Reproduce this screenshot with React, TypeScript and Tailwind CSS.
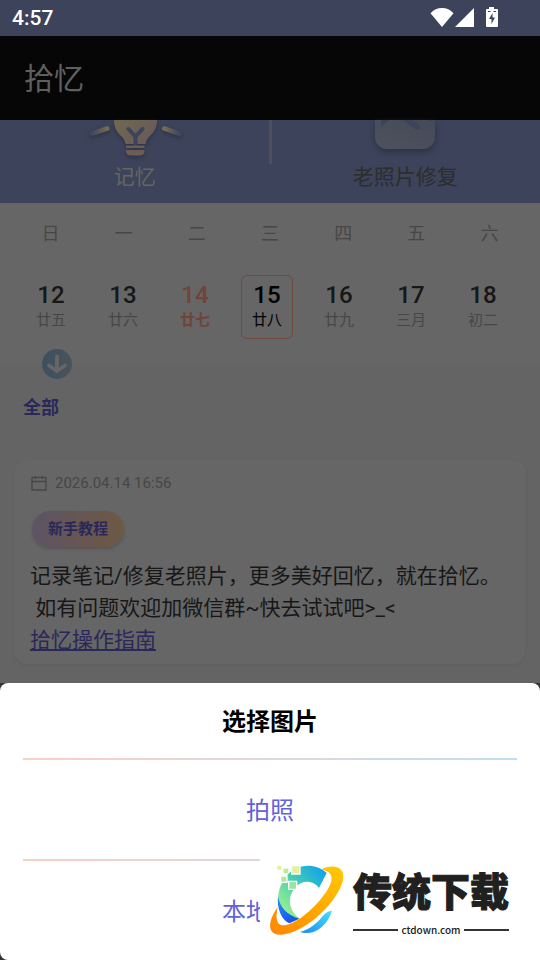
const weekdays = ['日', '一', '二', '三', '四', '五', '六'];

type Day = { day: string; lunar: string; state?: 'accent' | 'selected' };

const days: Day[] = [
  { day: '12', lunar: '廿五' },
  { day: '13', lunar: '廿六' },
  { day: '14', lunar: '廿七', state: 'accent' },
  { day: '15', lunar: '廿八', state: 'selected' },
  { day: '16', lunar: '廿九' },
  { day: '17', lunar: '三月' },
  { day: '18', lunar: '初二' },
];

function StatusBar() {
  return (
    <div className="flex h-9 items-center justify-between bg-[#3c435a] pl-3 pr-[41px] text-white">
      <span className="text-[21px] font-medium leading-9">4:57</span>
      <div className="flex items-center">
        <svg className="h-5 w-6" viewBox="0 0 24 20" fill="currentColor" aria-hidden="true">
          <path d="M12 19 0.5 5.2C3.5 1.700 7.500 0 12 0s8.500 1.700 11.500 5.200z" />
        </svg>
        <svg className="ml-px h-5 w-5" viewBox="0 0 20 20" fill="currentColor" aria-hidden="true">
          <path d="M19 0v19H0z" />
        </svg>
        <svg className="ml-2.5 h-[22px] w-3.5" viewBox="0 -1 14 22" aria-hidden="true">
          <path d="M4 -1h5v2h3a1 1 0 0 1 1 1v16a1 1 0 0 1-1 1H2a1 1 0 0 1-1-1V2a1 1 0 0 1 1-1h2z" fill="currentColor" />
          <path d="M7.500 5 4 11h2.500v5L10 9.500H7.500z" fill="#3c435a" />
          <path d="M3 3.500h2.500M8.500 3.500H11" stroke="#3c435a" />
        </svg>
      </div>
    </div>
  );
}

function BulbIcon() {
  return (
    <svg className="h-10 w-[100px] drop-shadow-[0_2px_2px_#2c3144]" viewBox="0 0 100 40" aria-hidden="true">
      <defs>
        <linearGradient id="bulb" x1="0" y1="0" x2="1" y2="0.500">
          <stop offset="0" stopColor="#6f684f" />
          <stop offset="1" stopColor="#695b5a" />
        </linearGradient>
        <linearGradient id="rayLeft" x1="1" y1="0" x2="0" y2="0">
          <stop offset="0" stopColor="#726c4f" />
          <stop offset="1" stopColor="#3f4860" />
        </linearGradient>
        <linearGradient id="rayRight" x1="0" y1="0" x2="1" y2="0">
          <stop offset="0" stopColor="#726c4f" />
          <stop offset="1" stopColor="#3f4860" />
        </linearGradient>
      </defs>
      <path d="M29 0h43c0 8-3 12-7 16-3 3-4 5-4.500 8h-20c-.500-3-1.500-5-4.500-8-4-4-7-8-7-16z" fill="url(#bulb)" />
      <path d="m43.500 9 7 7.500 7-7.500M50.500 16v8" fill="none" stroke="#3c435a" strokeWidth="4" strokeLinecap="round" />
      <path d="M41 25.500h18.500v2.500H41zM41 30h18.500v1c0 3-2 4.500-5 4.500H46c-3 0-5-1.500-5-4.500z" fill="#6b5c56" />
      <path d="M22 8.500 7.500 13.500" stroke="url(#rayLeft)" strokeWidth="5" strokeLinecap="round" />
      <path d="M79.500 8.500 94 13.500" stroke="url(#rayRight)" strokeWidth="5" strokeLinecap="round" />
    </svg>
  );
}

function PhotoIcon() {
  return (
    <svg className="h-10 w-[100px] drop-shadow-[0_3px_3px_#2c3144]" viewBox="0 0 100 40" aria-hidden="true">
      <defs>
        <linearGradient id="photo" x1="0" y1="1" x2="1" y2="0">
          <stop offset="0" stopColor="#4e525e" />
          <stop offset="1" stopColor="#454a58" />
        </linearGradient>
      </defs>
      <path d="M20 0h60v17a12 12 0 0 1-12 12H32a12 12 0 0 1-12-12z" fill="url(#photo)" />
      <path d="M26 0h8l-8 7zM48 0h10l6.500 5.500c1.500 3-1.500 5-4.500 3.500z" fill="#3c435a" />
      <path d="M73 0h4v1h-4z" fill="#3c435a" />
    </svg>
  );
}

function FeatureTabs() {
  return (
    <nav className="flex h-[83px] items-start bg-[#3c435a]">
      <button className="flex flex-1 flex-col items-center text-[21px] leading-[34px] text-[#66665f]">
        <BulbIcon />
        记忆
      </button>
      <div className="-mx-px h-11 w-[3px] bg-[#4d505b]" />
      <button className="flex flex-1 flex-col items-center text-[21px] leading-[34px] text-[#2d2d2d]">
        <PhotoIcon />
        老照片修复
      </button>
    </nav>
  );
}

function DayCell({ item }: { item: Day }) {
  const tone =
    item.state === 'accent' ? 'text-[#704436] border-transparent'
      : item.state === 'selected' ? 'text-black border-[#704b3e]'
        : 'text-[#171717] border-transparent';
  const lunarTone =
    item.state === 'accent' ? 'font-bold' : item.state === 'selected' ? '' : 'text-[#474747]';
  return (
    <button className={`flex h-16 w-[52px] flex-col items-center justify-self-center rounded-md border pt-[5px] ${tone}`}>
      <span className="text-2xl font-medium leading-7">{item.day}</span>
      <span className={`text-[15px] leading-[22px] ${lunarTone}`}>{item.lunar}</span>
    </button>
  );
}

function Calendar() {
  return (
    <section className="bg-[#666666] pb-[25px]">
      <div className="grid h-[60px] grid-cols-7 items-center px-3.5 pt-0.5 text-center text-lg text-[#474747]">
        {weekdays.map((name) => <span key={name}>{name}</span>)}
      </div>
      <div className="grid grid-cols-7 pl-[15px] pr-[21px] pt-3">
        {days.map((item) => <DayCell key={item.day} item={item} />)}
      </div>
    </section>
  );
}

function Notes() {
  return (
    <section className="flex-1 bg-[#646464] px-[15px] pb-[19px]">
      <button className="relative -mt-[15px] ml-[27px] block" aria-label="展开日历">
        <svg className="size-[30px]" viewBox="0 0 30 30" aria-hidden="true">
          <defs>
            <linearGradient id="expand" x1="0" y1="0" x2="1" y2="0">
              <stop offset="0" stopColor="#3b505f" />
              <stop offset="1" stopColor="#4a535b" />
            </linearGradient>
          </defs>
          <circle cx="15" cy="15" r="15" fill="url(#expand)" />
          <path d="M15 7.500v14.500M7 16.500 15 22l8-5.500" fill="none" stroke="#666" strokeWidth="3.800" strokeLinecap="round" />
        </svg>
      </button>
      <h2 className="ml-2 mt-[15px] text-lg font-bold leading-7 text-[#2a2859]">全部</h2>
      <article className="mt-[38px] rounded-xl bg-[#666666] px-[15px] pb-2 pt-3 shadow-[0_2px_3px_#606060]">
        <div className="flex h-[22px] items-center gap-2 text-[15px] text-[#474747]">
          <svg className="ml-px size-4" viewBox="0 0 16 16" fill="none" stroke="currentColor" strokeWidth="1.300" aria-hidden="true">
            <path d="M1 2.500h14v12.500H1zM1 6.500h14M4.500 1v3M11.500 1v3" />
          </svg>
          <time>2026.04.14 16:56</time>
        </div>
        <button className="ml-0.5 mt-[17px] block h-9 rounded-full bg-linear-to-r from-[#5c5466] via-[#665654] to-[#6e5944] px-4 text-[15px] font-bold text-[#2a2859] shadow-[0_2px_3px_#555555]">
          新手教程
        </button>
        <p className="mt-[13px] whitespace-pre-wrap text-[21px] leading-8 text-[#171717]">
          {'记录笔记/修复老照片，更多美好回忆，就在拾忆。\n 如有问题欢迎加微信群~快去试试吧>_<\n'}
          <a href="#guide" className="text-[#2a2859] underline">拾忆操作指南</a>
        </p>
      </article>
    </section>
  );
}

function Divider() {
  return <div className="mx-[23px] h-0.5 bg-linear-to-r from-[#fbcfc5] to-[#bfdff2]" />;
}

function PictureSheet() {
  return (
    <div className="bg-[#333333]">
      <div role="dialog" aria-label="选择图片" className="rounded-lg bg-white text-center text-2xl">
        <h3 className="h-[75px] pt-0.5 font-bold leading-[75px] text-black">选择图片</h3>
        <Divider />
        <button className="block h-[99px] w-full pt-0.5 text-[#6361dc]">拍照</button>
        <Divider />
        <button className="block h-[99px] w-full pt-0.5 text-[#6361dc]">本地图片</button>
      </div>
    </div>
  );
}

function Watermark() {
  return (
    <div className="absolute bottom-0 right-0 flex h-[104px] w-[280px] bg-white pt-1">
      <svg className="h-20 w-[95px] shrink-0" viewBox="0 0 285 240" aria-hidden="true">
        <defs>
          <linearGradient id="ring" x1="0" y1="1" x2="1" y2="0">
            <stop offset="0" stopColor="#ff8500" />
            <stop offset="1" stopColor="#ffca05" />
          </linearGradient>
          <linearGradient id="crescent" x1="0" y1="1" x2="1" y2="0">
            <stop offset="0.150" stopColor="#9af18b" />
            <stop offset="0.550" stopColor="#42cbb5" />
            <stop offset="1" stopColor="#099cf4" />
          </linearGradient>
          <linearGradient id="base" x1="0" y1="1" x2="1" y2="0">
            <stop offset="0" stopColor="#168cf0" />
            <stop offset="1" stopColor="#48e0ff" />
          </linearGradient>
          <linearGradient id="shade" x1="0" y1="0" x2="0.600" y2="1">
            <stop offset="0" stopColor="#2693ff" />
            <stop offset="1" stopColor="#1752e8" />
          </linearGradient>
        </defs>
        <path d="M78 50C106 12 163 5 200 39L177 84C160 60 126 58 105 83c-26 32-17 70 14 92l-33 11c-38-33-43-91-8-136z" fill="url(#crescent)" />
        <path d="M54 108c6 35 28 58 64 68l-30 14c-23-10-38-43-34-82z" fill="url(#shade)" />
        <path d="M216 152c-14 47-55 77-96 64 32-9 51-27 69-49 8-9 17-14 27-15z" fill="url(#base)" />
        <path d="M183 29c27-16 57-12 65 8 13 36-39 107-93 147-52 39-107 52-121 28-9-16-1-42 19-71-8 38-1 54 15 55 31 0 79-36 112-76 38-45 53-85 3-91z" fill="url(#ring)" />
        <path d="M52 18h11v11H52z" fill="#e7f28d" />
        <path d="M71 26h14v14H71z" fill="#b7ed93" />
        <g stroke="#fff" strokeWidth="4">
          <path d="M95 17h25v25H95z" fill="#e2f19a" />
          <path d="M62 48h19v19H62z" fill="#b0eb91" />
          <path d="M86 64h24v24H86z" fill="#9be696" />
        </g>
      </svg>
      <div className="-ml-0.5 w-[156px] text-[#202020]">
        <div className="h-[62px] whitespace-nowrap pt-0.5 text-[39px] font-black leading-[62px] [-webkit-text-stroke:1px_#202020]">传统下载</div>
        <div className="flex items-center justify-between font-['Noto_Sans_CJK_SC',sans-serif] text-[10px] font-medium leading-4">
          <span className="h-0.5 w-[45px] bg-[#333333]" />
          ctdown.com
          <span className="h-0.5 w-[45px] bg-[#333333]" />
        </div>
      </div>
    </div>
  );
}

export default function App() {
  return (
    <div lang="zh-CN" className="relative flex min-h-screen flex-col bg-[#646464] font-[Roboto,'Noto_Sans_CJK_SC',sans-serif]">
      <StatusBar />
      <header className="flex h-[84px] items-center bg-[#060606] px-6">
        <h1 className="text-[30px] text-[#5f5f5f]">拾忆</h1>
      </header>
      <FeatureTabs />
      <Calendar />
      <Notes />
      <PictureSheet />
      <Watermark />
    </div>
  );
}
